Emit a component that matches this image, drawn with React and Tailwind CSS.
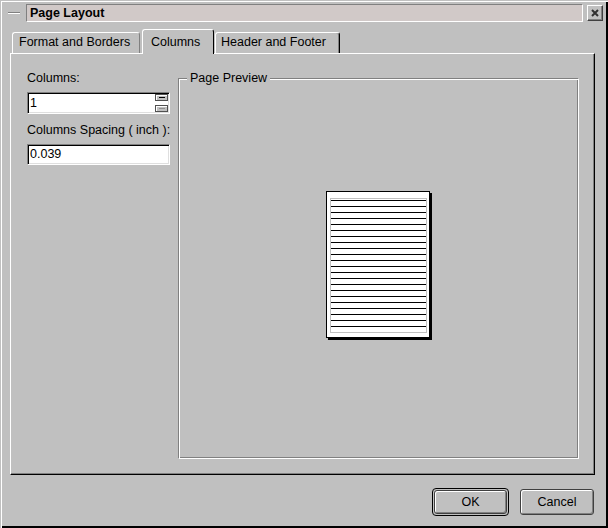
const lines = Array.from({ length: 22 });

const SpinButton = ({ dim }) => (
    <div className="flex h-[7px] w-[13px] items-center justify-center border border-[#505050] bg-[#c0c0c0] shadow-[inset_1px_1px_0_#fff]">
        <div className={dim ? "h-px w-[6px] bg-[#909090]" : "h-px w-[6px] bg-black"}></div>
    </div>
);

const App = () => {
    return (
        <div className="flex h-[528px] w-[608px] flex-col bg-[#c0c0c0] font-['Liberation_Sans',Arial,sans-serif] text-[12.5px] leading-[15px] text-black shadow-[inset_1px_1px_0_#c0c0c0,inset_2px_2px_0_#fff,inset_-2px_-2px_0_#000]">
            {/* Title bar */}
            <div className="mt-[4px] flex h-[18px] items-center pl-[8px]">
                <div className="h-[2px] w-[12px] border-t border-b border-t-[#808080] border-b-white"></div>
                <div className="ml-[6px] flex h-[18px] w-[557px] items-center border border-t-[#808080] border-l-[#808080] border-b-white border-r-white bg-[#d1c9c8] pl-[3px] font-bold">
                    Page Layout
                </div>
                <div className="ml-[4px] flex h-[16px] w-[16px] items-center justify-center border border-t-white border-l-white border-b-[#404040] border-r-[#404040] shadow-[inset_-1px_-1px_0_#808080]">
                    <svg width="8" height="8" viewBox="0 0 8 8">
                        <path d="M1 1L7 7M7 1L1 7" stroke="#303030" strokeWidth="2" />
                    </svg>
                </div>
            </div>

            {/* Tabs */}
            <div className="mt-[7px] flex items-end pl-[12px]">
                <div className="h-[21px] w-[128px] rounded-t-[3px] border-t border-l border-r border-t-white border-l-white border-r-[#808080] pl-[6px] pt-[2px]">
                    Format and Borders
                </div>
                <div className="relative z-10 -mb-px ml-[2px] h-[25px] w-[72px] rounded-t-[3px] border-t border-l border-r border-t-white border-l-white border-r-black bg-[#c0c0c0] pl-[8px] pt-[5px]">
                    Columns
                </div>
                <div className="ml-px h-[21px] w-[125px] rounded-t-[3px] border-t border-l border-r border-t-white border-l-white border-r-black pl-[5px] pt-[2px] shadow-[inset_-1px_0_0_#808080]">
                    Header and Footer
                </div>
            </div>

            {/* Panel */}
            <div className="ml-[10px] flex h-[422px] w-[585px] border border-t-white border-l-white border-r-black border-b-black pl-[16px] pt-[17px] shadow-[inset_-1px_-1px_0_#808080]">
                <div className="flex w-[143px] flex-col">
                    <div>Columns:</div>
                    <div className="mt-[6px] flex h-[22px] w-[143px] items-center border border-t-[#808080] border-l-[#808080] border-r-white border-b-white bg-white shadow-[inset_1px_1px_0_#000,inset_-1px_-1px_0_#dfdfdf]">
                        <span className="flex-1 pl-[2px]">1</span>
                        <div className="mr-[1px] flex flex-col gap-[4px]">
                            <SpinButton />
                            <SpinButton dim />
                        </div>
                    </div>
                    <div className="mt-[9px] whitespace-nowrap">Columns Spacing ( inch ):</div>
                    <div className="mt-[6px] flex h-[21px] w-[143px] items-center border border-t-[#808080] border-l-[#808080] border-r-white border-b-white bg-white pl-[2px] shadow-[inset_1px_1px_0_#000,inset_-1px_-1px_0_#dfdfdf]">
                        0.039
                    </div>
                </div>

                <fieldset className="ml-[8px] h-[388px] w-[401px] min-w-0 border border-t-[#808080] border-l-[#808080] border-r-white border-b-white shadow-[inset_1px_1px_0_#fff,inset_-1px_-1px_0_#808080]">
                    <legend className="ml-[8px] bg-[#c0c0c0] px-[3px] leading-[15px]">Page Preview</legend>
                    <div className="flex h-[372px] items-center justify-center pb-[16px] pr-[2px]">
                        <div className="h-[147px] w-[104px] border border-black bg-white pl-[3px] pt-[6px] shadow-[2px_2px_0_#000]">
                            <div className="flex h-[135px] w-[97px] flex-col gap-[5px] border border-[#c0c0c0] pt-[1px]">
                                {lines.map((_, i) => (
                                    <div key={i} className="h-px bg-black"></div>
                                ))}
                            </div>
                        </div>
                    </div>
                </fieldset>
            </div>

            {/* Buttons */}
            <div className="mt-[13px] flex items-center justify-end gap-[11px] pr-[14px]">
                <div className="h-[28px] w-[77px] rounded-[4px] border border-black p-[1px]">
                    <button className="h-full w-full rounded-[3px] border border-[#404040] bg-[#c0c0c0] shadow-[inset_1px_1px_0_#fff,inset_-1px_-1px_0_#808080]">
                        OK
                    </button>
                </div>
                <button className="h-[26px] w-[74px] rounded-[3px] border border-[#404040] bg-[#c0c0c0] shadow-[inset_1px_1px_0_#fff,inset_-1px_-1px_0_#808080]">
                    Cancel
                </button>
            </div>
        </div>
    );
};

export default App;
